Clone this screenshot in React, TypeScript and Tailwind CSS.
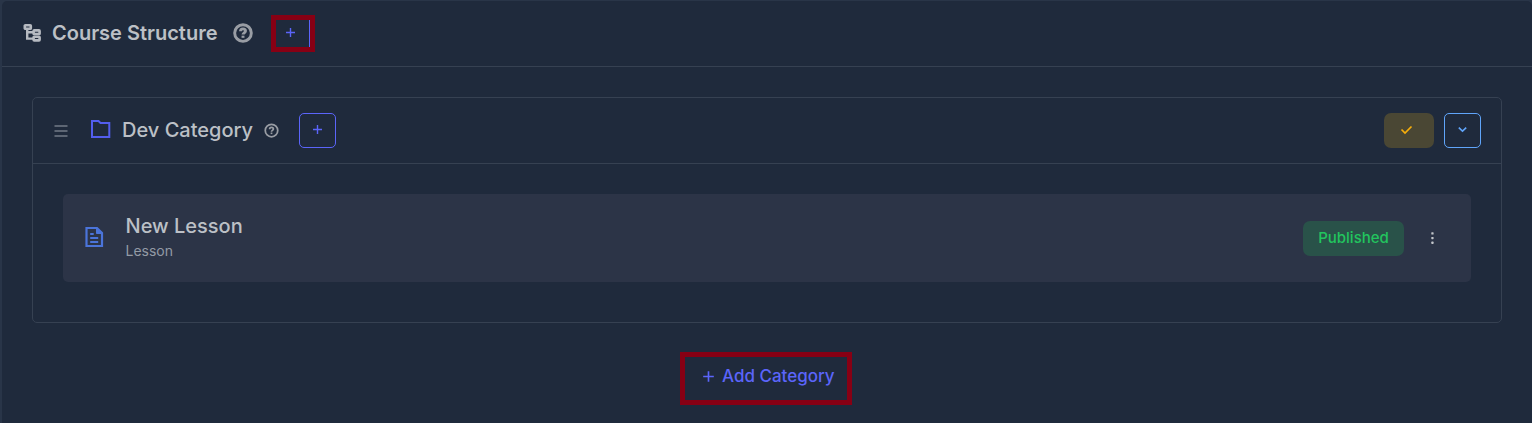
import type { ReactNode } from 'react';

function Icon({ className, box = 24, children }: { className: string; box?: number; children: ReactNode }) {
  return (
    <svg className={`block shrink-0 ${className}`} viewBox={`0 0 ${box} ${box}`} fill="none" stroke="currentColor" aria-hidden="true">
      {children}
    </svg>
  );
}

function TreeIcon() {
  return (
    <Icon className="mb-px size-[20px] text-[#b6bac1]" box={20}>
      <g strokeWidth="2.6">
        <rect x="2.8" y="2.2" width="6" height="3.6" rx="0.6" />
        <rect x="11.6" y="7.4" width="6" height="3.6" rx="0.6" />
        <rect x="11.6" y="13.8" width="6" height="3.6" rx="0.6" />
      </g>
      <path d="M5.2 6v9.6h6M5 9.2h6" strokeWidth="2.4" />
    </Icon>
  );
}

function HelpIcon({ className, weight }: { className: string; weight: number }) {
  return (
    <Icon className={className}>
      <circle cx="12" cy="12" r="10" strokeWidth={weight} />
      <path d="M9 9.8c0-1.7 1.3-2.8 3-2.8s3 1.1 3 2.7c0 2-3 2.2-3 4.2" strokeWidth={weight} />
      <path d="M12 15.2v2.6" strokeWidth={weight} />
    </Icon>
  );
}

function PlusIcon({ className }: { className: string }) {
  return (
    <Icon className={className} box={11}>
      <path d="M5.5 1v9M1 5.5h9" strokeWidth="1.4" />
    </Icon>
  );
}

export default function App() {
  return (
    <div className="h-[423px] w-full overflow-hidden bg-[#293548] pl-[2px] pt-px font-['Inter',sans-serif]">
      <main className="h-[422px] rounded-t-[5px] bg-[#1f2a3c]">
        <header className="flex h-[66px] items-center border-b border-[#364152] pl-[20px]">
          <TreeIcon />
          <h1 className="ml-[10px] w-[166px] whitespace-nowrap pb-[2px] text-[20px] font-semibold leading-[30px] text-[#bcc0c6]">Course Structure</h1>
          <HelpIcon className="mb-px ml-[14.5px] mr-[0.5px] size-[20px] text-[#999da4]" weight={3.5} />
          <button className="ml-[18px] flex h-[37px] w-[44px] border-[5px] border-[#870014]" aria-label="Add category">
            <span className="flex h-full w-full items-center border-r border-[#5b65fa] pb-[2px] pl-[9px]">
              <PlusIcon className="size-[11px] text-[#5b65fa]" />
            </span>
          </button>
        </header>

        <section className="ml-[30px] mt-[30px] h-[226px] w-[1470px] rounded-[5px] border border-[#364152]">
          <div className="flex h-[66px] items-center border-b border-[#364152] pl-[21px] pr-[20px]">
            <Icon className="size-[14px] text-[#737b87]" box={14}>
              <path d="M.5 2h13M.5 7h13M.5 12h13" strokeWidth="1.5" />
            </Icon>
            <Icon className="mb-px ml-[22px] size-[22px] text-[#535eee]" box={22}>
              <path d="M2 2h6.5l2 2h8.8v14H2z" strokeWidth="2" />
            </Icon>
            <h2 className="ml-[10px] w-[133px] whitespace-nowrap pb-[2px] text-[20px] font-medium leading-[30px] text-[#bcc0c6]">Dev Category</h2>
            <HelpIcon className="ml-[8.5px] mr-[0.5px] size-[15px] text-[#999da4]" weight={2.8} />
            <button className="ml-[20px] flex h-[35px] w-[37px] items-center justify-center rounded-[5px] border border-[#5b65fa] pb-[2px]" aria-label="Add lesson">
              <PlusIcon className="size-[11px] text-[#5b65fa]" />
            </button>
            <button className="ml-auto flex h-[35px] w-[50px] items-center justify-center rounded-[7px] bg-[#4a4734] pb-[2px] pr-[5px] text-[#f7ae0b]" aria-label="Category ready">
              <Icon className="size-[13px]" box={13}>
                <path d="M1.5 6.5l3.5 3.5 6.5-6.5" strokeWidth="1.7" />
              </Icon>
            </button>
            <button className="ml-[10px] flex h-[35px] w-[37px] items-center justify-center rounded-[5px] border border-[#60a5fa] pb-[2px] text-[#60a5fa]" aria-label="Collapse category">
              <Icon className="size-[11px]" box={11}>
                <path d="M1.8 3.7l3.7 3.5 3.7-3.5" strokeWidth="1.6" />
              </Icon>
            </button>
          </div>
          <div className="mx-[30px] mt-[30px] flex h-[88px] items-center rounded-[5px] bg-[#2c3447] pl-[20px] pr-[33px]">
            <Icon className="mb-[2px] size-[22px] text-[#4b74da]" box={22}>
              <path d="M3.5 2H14l5 5v13H3.5z" strokeWidth="2.2" />
              <path d="M13.5 2v5.5H19z" fill="currentColor" strokeWidth="1" />
              <path d="M7.2 8h3.5M7.2 12h8M7.2 16h8" strokeWidth="2" />
            </Icon>
            <div className="ml-[20.5px] pb-[5px]">
              <h3 className="text-[20px] font-medium leading-[30px] text-[#bcc0c6]">New Lesson</h3>
              <p className="text-[14px] leading-[20px] text-[#939aa5]">Lesson</p>
            </div>
            <span className="ml-auto flex h-[35px] w-[101px] items-center justify-center rounded-[7px] bg-[#295249] text-[15px] font-medium text-[#22c55e]">Published</span>
            <button className="ml-[23px] text-[#c2c5ca]" aria-label="Lesson options">
              <svg className="block h-[13px] w-[11px]" viewBox="0 0 11 13" fill="currentColor" aria-hidden="true">
                <rect x="4.3" y="0.2" width="2.3" height="2.3" rx="0.6" />
                <rect x="4.3" y="4.9" width="2.3" height="2.3" rx="0.6" />
                <rect x="4.3" y="9.6" width="2.3" height="2.3" rx="0.6" />
              </svg>
            </button>
          </div>
        </section>

        <button className="ml-[678px] mt-[29px] flex h-[53px] w-[172px] items-center border-[5px] border-[#870014] pb-[5px] pl-[17px] text-[#5b65fa]">
          <PlusIcon className="size-[13px]" />
          <span className="ml-[7px] whitespace-nowrap text-[17px] font-medium leading-[24px]">Add Category</span>
        </button>
      </main>
    </div>
  );
}
